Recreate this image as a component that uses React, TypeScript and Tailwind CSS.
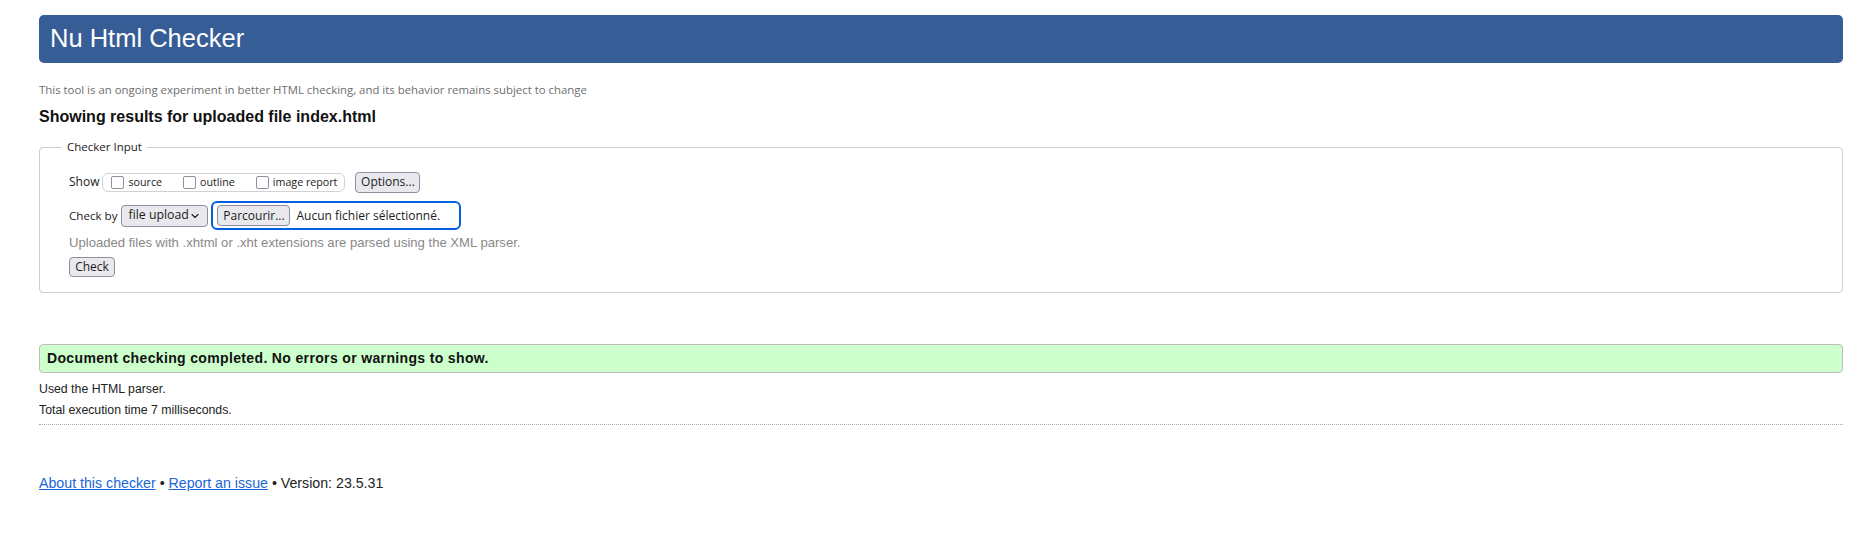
import { ChevronDown } from 'lucide-react';

const ui = { fontFamily: '"Open Sans", "Noto Sans", sans-serif' };
const arial = { fontFamily: '"Liberation Sans", Arial, sans-serif' };

const CheckOption = ({ label }: { label: string }) => (
  <label className="flex items-center gap-[4px] text-[10.7px] leading-none text-[#1c1b22]">
    <span className="w-[13px] h-[13px] rounded-[2px] border-[1.5px] border-[#8f8f9d] bg-white" />
    {label}
  </label>
);

const FfButton = ({ children, className = '' }: { children: React.ReactNode; className?: string }) => (
  <button
    type="button"
    className={`flex items-center justify-center bg-[#e9e9ed] border border-[#8f8f9d] rounded-[4px] text-[12px] text-[#1c1b22] leading-none ${className}`}
  >
    {children}
  </button>
);

export default function App() {
  return (
    <div className="min-h-screen bg-white pl-[39px] pr-[30px] pt-[15px]" style={arial}>
      {/* header */}
      <div className="h-[48px] bg-[#365d96] rounded-[5px] flex items-center px-[11px]">
        <h1 className="text-white text-[25.5px] leading-none font-normal">Nu Html Checker</h1>
      </div>

      <p className="mt-[19px] h-[16px] leading-[16px] text-[11.4px] text-[#6e6e6e]" style={ui}>
        This tool is an ongoing experiment in better HTML checking, and its behavior remains subject to change
      </p>

      <h2 className="mt-[9px] text-[16px] leading-[20px] font-bold text-[#111]">
        Showing results for uploaded file index.html
      </h2>

      <fieldset className="mt-[12px] border border-[#cfcfcf] rounded-[4px] px-[29px] pb-[15px]">
        <legend className="-ml-[7px] px-[5px] text-[11.5px] leading-[16px] text-[#1c1b22]" style={ui}>
          Checker Input
        </legend>

        <div className="mt-[16px] h-[22px] flex items-center" style={ui}>
          <span className="text-[12px] text-[#1c1b22]">Show</span>
          <div className="ml-[3px] h-[19px] flex items-center gap-[21px] pl-[8px] pr-[7px] border border-[#d2d2d2] rounded-[6px]">
            <CheckOption label="source" />
            <CheckOption label="outline" />
            <CheckOption label="image report" />
          </div>
          <FfButton className="ml-[10px] h-[21px] w-[65px]">Options...</FfButton>
        </div>

        <div className="mt-[8px] h-[29px] flex items-center" style={ui}>
          <span className="text-[11.6px] text-[#1c1b22]">Check by</span>
          <div className="ml-[4px] h-[22px] w-[87px] flex items-center justify-between pl-[6px] pr-[6px] bg-[#e9e9ed] border border-[#8f8f9d] rounded-[4px] text-[12.3px] text-[#1c1b22]">
            file upload
            <ChevronDown size={12} strokeWidth={2.2} />
          </div>
          <div className="ml-[3px] h-[29px] w-[250px] flex items-center border-2 border-[#0060df] rounded-[6px] pl-[4px]">
            <FfButton className="h-[21px] w-[73px]">Parcourir...</FfButton>
            <span className="ml-[6px] text-[12px] text-[#1c1b22]">Aucun fichier sélectionné.</span>
          </div>
        </div>

        <p className="mt-[5px] text-[13.1px] leading-[16px] text-[#888]">
          Uploaded files with .xhtml or .xht extensions are parsed using the XML parser.
        </p>

        <div className="mt-[6px]" style={ui}>
          <FfButton className="h-[20px] w-[46px]">Check</FfButton>
        </div>
      </fieldset>

      <div className="mt-[51px] h-[29px] flex items-center pl-[7px] bg-[#ccffcc] border border-[#bdbdbd] rounded-[4px]">
        <p className="text-[14px] tracking-[0.35px] font-bold text-[#111]">
          Document checking completed. No errors or warnings to show.
        </p>
      </div>

      <p className="mt-[8px] text-[12.3px] leading-[16px] text-[#222]">Used the HTML parser.</p>
      <p className="mt-[5px] text-[12.3px] leading-[16px] text-[#222]">Total execution time 7 milliseconds.</p>
      <div className="mt-[6px] border-t border-dotted border-[#a8a8a8]" />

      <p className="mt-[49px] text-[14.2px] leading-[18px] text-[#222]">
        <a href="#" className="text-[#1a66d6] underline">About this checker</a>
        {' • '}
        <a href="#" className="text-[#1a66d6] underline">Report an issue</a>
        {' • Version: 23.5.31'}
      </p>
    </div>
  );
}
